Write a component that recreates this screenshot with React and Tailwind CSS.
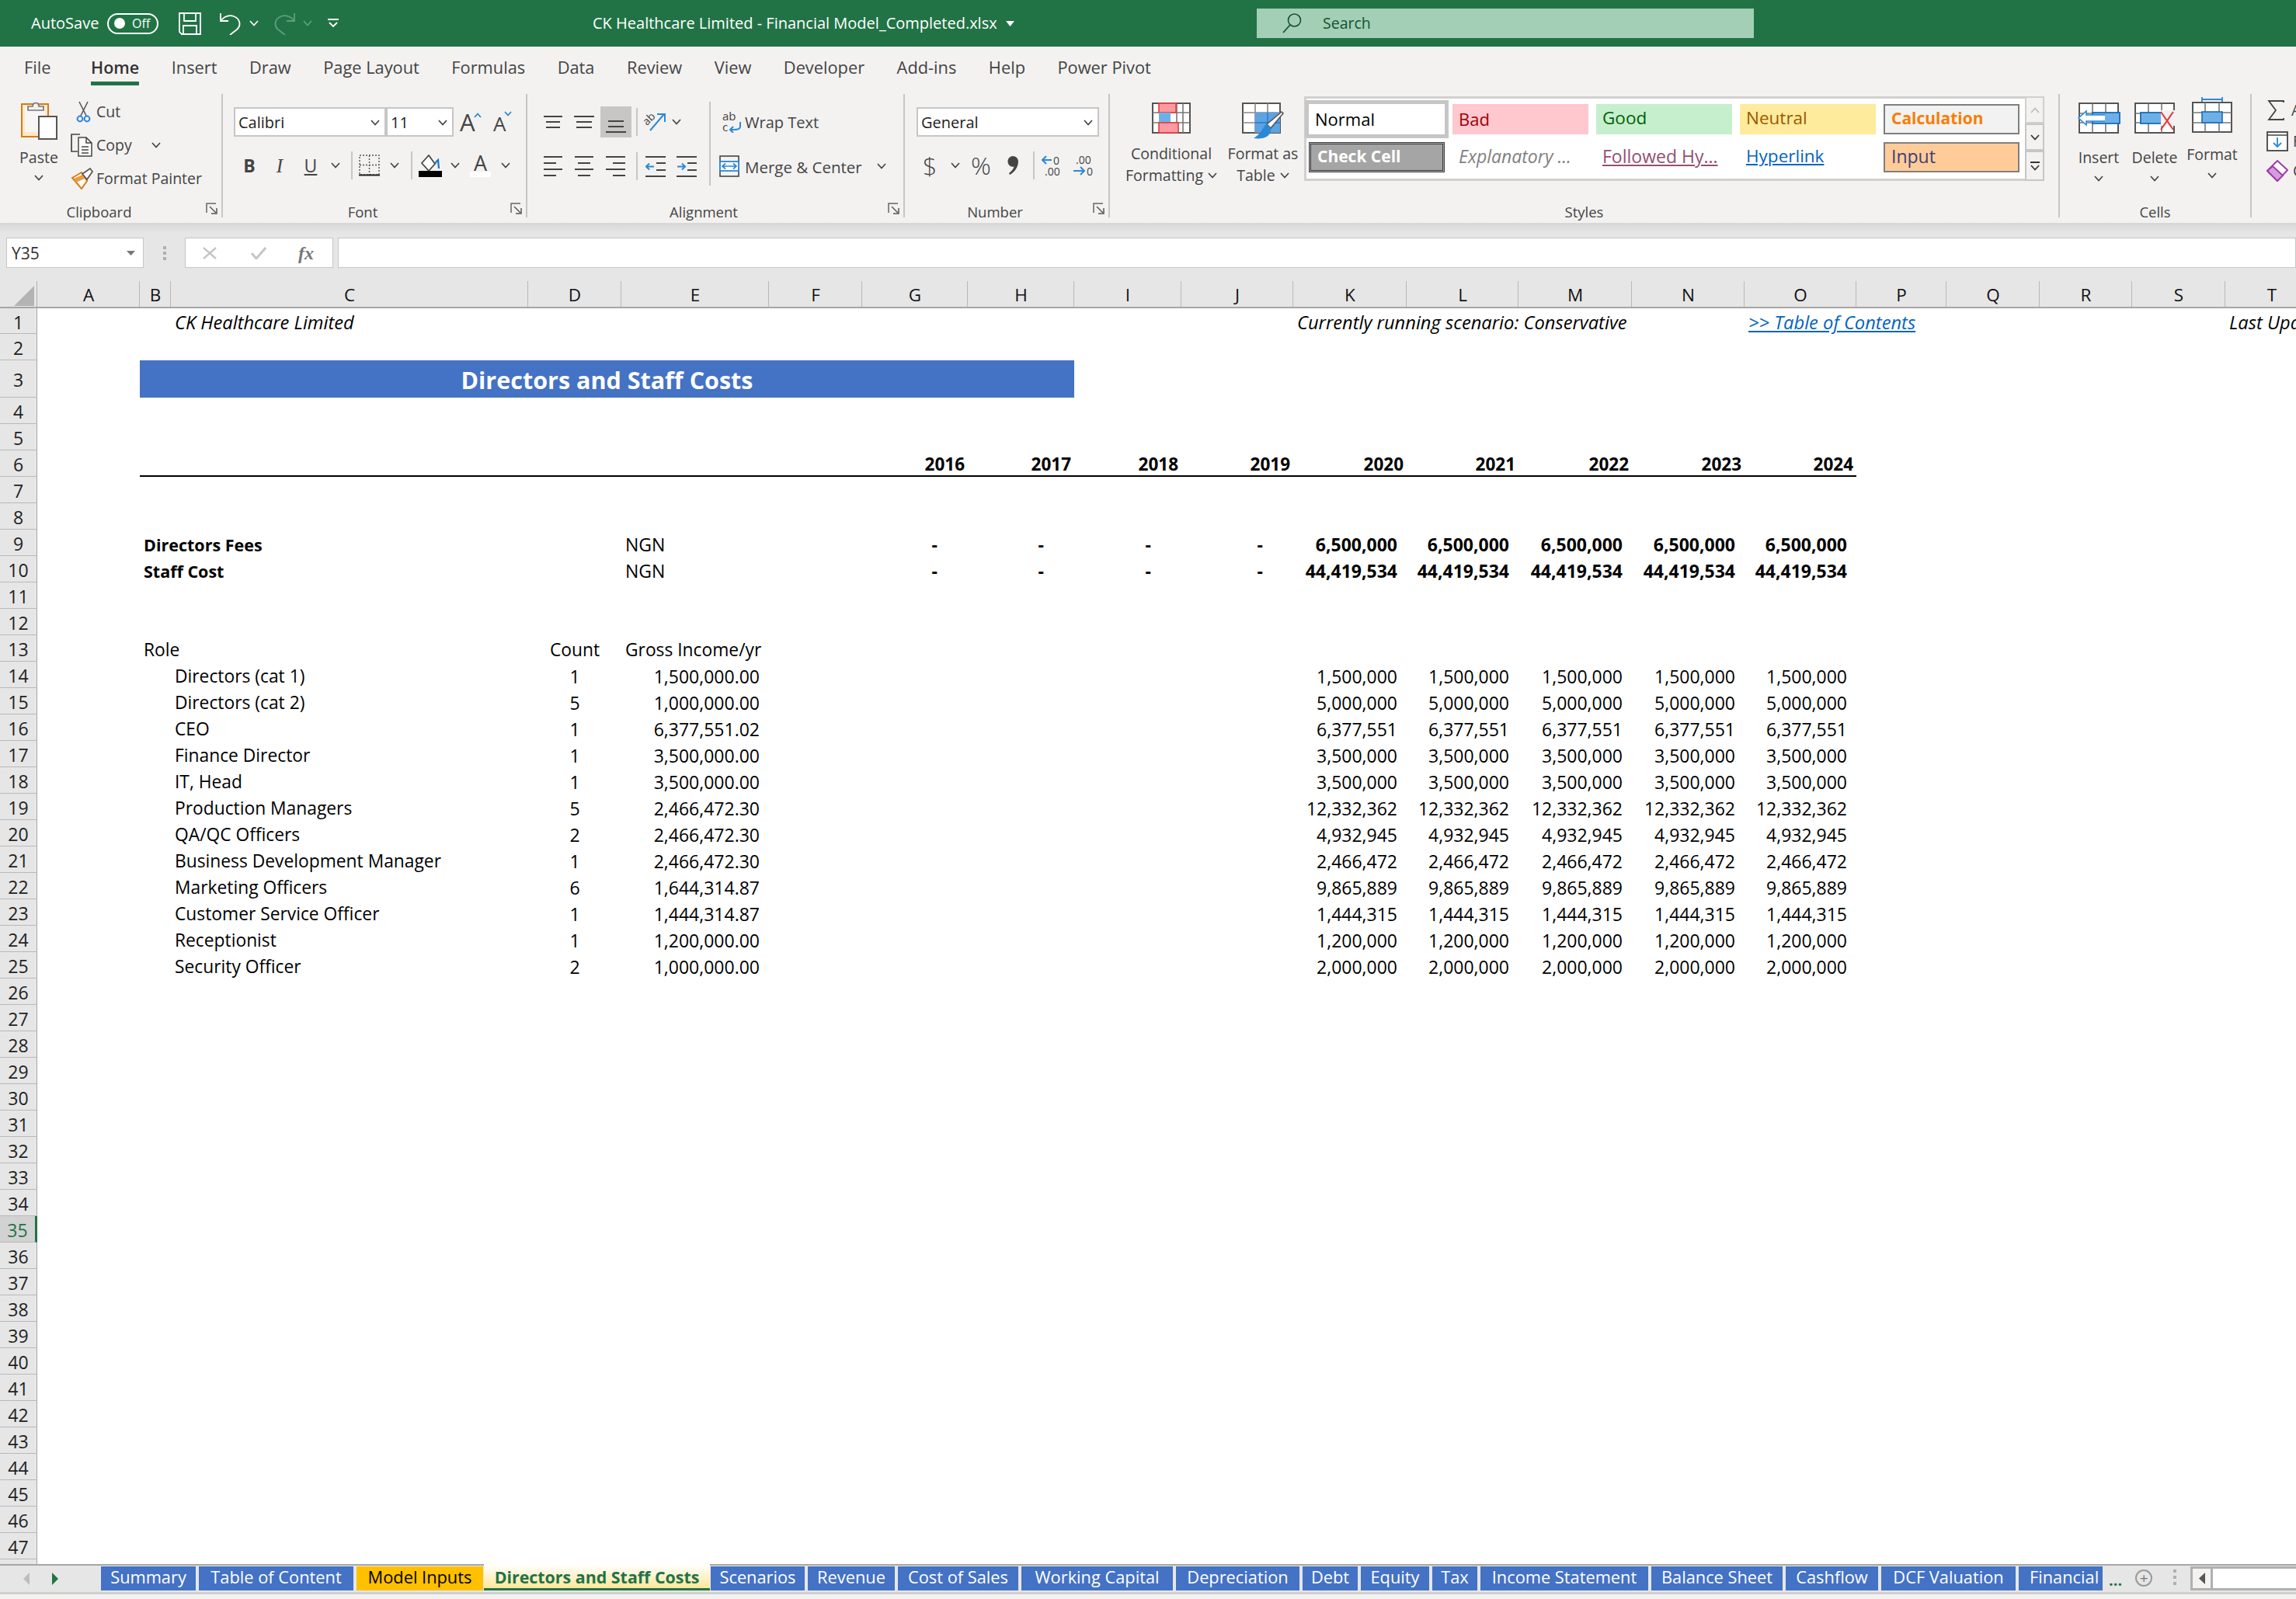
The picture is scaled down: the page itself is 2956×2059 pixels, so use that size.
import React from 'react';

const Chev = ({ c = '#444', className = '' }) => (
  <svg width="12" height="8" viewBox="0 0 12 8" className={`shrink-0 ${className}`}>
    <polyline points="1,1 6,6.5 11,1" fill="none" stroke={c} strokeWidth="1.7" />
  </svg>
);

const Launcher = () => (
  <svg width="15" height="15" viewBox="0 0 15 15">
    <polyline points="1,13 1,1 13,1" fill="none" stroke="#666" strokeWidth="1.5" />
    <polyline points="5,5 13,13" fill="none" stroke="#555" strokeWidth="1.5" />
    <polyline points="14,7 14,14 7,14" fill="none" stroke="#555" strokeWidth="1.5" />
  </svg>
);

const Sep = ({ className = '' }) => <div className={`w-[2px] h-[36px] bg-[#c8c6c4] shrink-0 ${className}`} />;

const Lines = ({ rows, w = 26, h = 16, c = '#444' }) => (
  <svg width={w} height={h} viewBox={`0 0 ${w} ${h}`} className="shrink-0">
    {rows.map(([x1, x2, y], i) => (
      <line key={i} x1={x1} x2={x2} y1={y} y2={y} stroke={c} strokeWidth="2" />
    ))}
  </svg>
);

function Group({ w, label, launcher, children }) {
  return (
    <div className={`relative flex flex-col shrink-0 h-[159px] mt-[11px] border-r-2 border-[#c8c6c4] ${w}`}>
      <div className="flex-1 min-h-0 flex">{children}</div>
      <div className={`relative h-[24px] -mb-[5px] flex items-center justify-center text-[18.5px] text-[#444] leading-none ${launcher ? 'pr-[30px]' : ''}`}>
        {label}
        {launcher && (
          <span className="absolute right-[5px] top-[0px] flex">
            <Launcher />
          </span>
        )}
      </div>
    </div>
  );
}

const GridIcon = ({ children, w = 50, h = 40 }) => (
  <svg width={w} height={h} viewBox={`0 0 ${w} ${h}`} className="shrink-0">{children}</svg>
);

function TitleBar() {
  return (
    <div className="h-[60px] shrink-0 bg-[#217346] flex items-center text-white">
      <span className="ml-[40px] w-[98px] text-[20px] leading-none">AutoSave</span>
      <div className="w-[66px] h-[27px] rounded-full border-2 border-white flex items-center pl-[7px]">
        <span className="w-[14px] h-[14px] rounded-full bg-white" />
        <span className="ml-[9px] text-[16px] leading-none">Off</span>
      </div>
      <svg width="29" height="29" viewBox="0 0 29 29" className="ml-[26px]">
        <path d="M1 1H28V28H4L1 25Z M7 1V11H22V1 M6 28V17H23V28" fill="none" stroke="#fff" strokeWidth="1.8" />
      </svg>
      <svg width="27" height="29" viewBox="0 0 27 29" className="ml-[24px]">
        <path d="M1 1V11H11 M1 11C6 5 12 3 18 5C26 8 28 17 22 22L13 29" fill="none" stroke="#fff" strokeWidth="1.8" />
      </svg>
      <Chev c="#fff" className="ml-[11px]" />
      <svg width="27" height="29" viewBox="0 0 27 29" className="ml-[20px]">
        <path d="M26 1V11H16 M26 11C21 5 15 3 9 5C1 8 -1 17 5 22L14 29" fill="none" stroke="#5f9f7d" strokeWidth="1.8" />
      </svg>
      <Chev c="#5f9f7d" className="ml-[10px]" />
      <svg width="14" height="12" viewBox="0 0 14 12" className="ml-[20px]">
        <path d="M0 1H14 M2 5L7 10L12 5" fill="none" stroke="#fff" strokeWidth="1.8" />
      </svg>
      <span className="ml-[327px] w-[525px] text-[20px] leading-none whitespace-nowrap">CK Healthcare Limited - Financial Model_Completed.xlsx</span>
      <svg width="11" height="7" viewBox="0 0 11 7" className="ml-[7px]">
        <path d="M0 0H11L5.5 7Z" fill="#fff" />
      </svg>
      <div className="ml-[312px] w-[640px] h-[38px] bg-[#a2cfb5] flex items-center text-[#14532f]">
        <svg width="25" height="26" viewBox="0 0 25 26" className="ml-[33px]">
          <circle cx="15.5" cy="9" r="8" fill="none" stroke="#14532f" strokeWidth="1.6" />
          <line x1="10" y1="15" x2="1" y2="25" stroke="#14532f" strokeWidth="1.8" />
        </svg>
        <span className="ml-[27px] text-[19.5px] leading-none">Search</span>
      </div>
    </div>
  );
}

const TABS = ['File', 'Home', 'Insert', 'Draw', 'Page Layout', 'Formulas', 'Data', 'Review', 'View', 'Developer', 'Add-ins', 'Help', 'Power Pivot'];

function TabStrip() {
  return (
    <div className="h-[50px] flex items-stretch pl-[31px] gap-[41.5px] text-[21.8px] text-[#444] whitespace-nowrap">
      {TABS.map((t) => (
        <div key={t} className={`flex items-center ${t === 'Home' ? 'font-semibold text-[21.5px] border-b-[5px] border-[#217346] text-[#333] pt-[10px]' : 'pt-[5px]'} ${t === 'File' ? 'mr-[10px]' : ''}`}>
          {t}
        </div>
      ))}
    </div>
  );
}

function Clipboard() {
  const item = 'h-[43px] flex items-center text-[#444] text-[19.5px] whitespace-nowrap';
  return (
    <Group w="w-[287px]" label="Clipboard" launcher>
      <div className="ml-[6px] w-[88px] flex flex-col items-center pt-[7px] shrink-0 text-[19.5px] text-[#444]">
        <svg width="47" height="52" viewBox="0 0 47 52">
          <rect x="1" y="6" width="34" height="42" fill="#fbe9c8" stroke="#d77b18" strokeWidth="2" />
          <rect x="5" y="9" width="26" height="33" fill="#f7f6f5" />
          <path d="M9 14V9H15C15 3 23 3 23 9H29V14Z" fill="#f3f2f1" stroke="#777" strokeWidth="1.7" />
          <rect x="23" y="22" width="23" height="29" fill="#fff" stroke="#555" strokeWidth="2" />
        </svg>
        <span className="mt-[9px] leading-[28px]">Paste</span>
        <Chev className="mt-[8px]" />
      </div>
      <div className="pt-[1px] flex flex-col ml-[-3px]">
        <div className={item}>
          <svg width="33" height="30" viewBox="0 0 33 30" className="shrink-0">
            <path d="M11 2L20 20 M22 2L13 20" fill="none" stroke="#555" strokeWidth="1.6" />
            <circle cx="12" cy="24" r="3.4" fill="none" stroke="#2b88d8" strokeWidth="2" />
            <circle cx="21" cy="24" r="3.4" fill="none" stroke="#2b88d8" strokeWidth="2" />
          </svg>
          <span>Cut</span>
        </div>
        <div className={item}>
          <svg width="33" height="30" viewBox="0 0 33 30" className="shrink-0">
            <path d="M9 23H1V1H12" fill="none" stroke="#444" strokeWidth="1.7" />
            <path d="M10 5H20L27 12V29H10Z M20 5V12H27 M14 17H23 M14 21H23 M14 25H23" fill="#fff" stroke="#444" strokeWidth="1.5" />
          </svg>
          <span>Copy</span>
          <Chev className="ml-[25px]" />
        </div>
        <div className={item}>
          <svg width="33" height="28" viewBox="0 0 33 28" className="shrink-0">
            <path d="M2 13L14 6L21 17L14 27Z" fill="#fff" stroke="#d77b18" strokeWidth="2" />
            <path d="M4 14L15 9L18 14L7 19Z" fill="#ed9b40" />
            <path d="M15 8L25 1L28 5L21 15Z" fill="#fff" stroke="#555" strokeWidth="1.7" />
          </svg>
          <span>Format Painter</span>
        </div>
      </div>
    </Group>
  );
}

function Box({ w, text, className = '' }) {
  return (
    <div className={`${w} h-[38px] shrink-0 bg-white border-2 border-[#c6c6c6] flex items-center justify-between pl-[4px] pr-[6px] pt-[2px] text-[20px] text-[#222] ${className}`}>
      <span>{text}</span>
      <Chev />
    </div>
  );
}

function FontGroup() {
  return (
    <Group w="w-[392px]" label="Font" launcher>
      <div className="flex flex-col">
        <div className="flex items-center pt-[17px] ml-[14px]">
          <Box w="w-[196px]" text="Calibri" />
          <Box w="w-[87px]" text="11" />
          <div className="ml-[8px] w-[26px] relative text-[31px] leading-none text-[#444]">
            A
            <svg width="10" height="7" viewBox="0 0 10 7" className="absolute left-[18px] top-[3px]">
              <polyline points="1,6 5,1.5 9,6" fill="none" stroke="#2b88d8" strokeWidth="1.8" />
            </svg>
          </div>
          <div className="ml-[17px] w-[24px] relative text-[26px] leading-none text-[#444] pt-[3px]">
            A
            <svg width="10" height="7" viewBox="0 0 10 7" className="absolute left-[14px] top-[0px]">
              <polyline points="1,1 5,5.5 9,1" fill="none" stroke="#2b88d8" strokeWidth="1.8" />
            </svg>
          </div>
        </div>
        <div className="flex items-center mt-[17px] h-[40px] text-[#444]">
          <span className="ml-[17px] w-[34px] text-center font-bold text-[23px] leading-none">B</span>
          <span className="ml-[5px] w-[34px] text-center italic text-[25px] leading-none font-['Liberation_Serif',serif]">I</span>
          <span className="ml-[5px] w-[36px] text-center underline text-[23px] leading-none">U</span>
          <Chev className="ml-[8px] mr-[8px]" />
          <Sep className="ml-[6px]" />
          <svg width="27" height="28" viewBox="0 0 27 28" className="ml-[8px] shrink-0">
            <path d="M1 1H26V26H1Z M13.5 1V26 M1 13.5H26" fill="none" stroke="#555" strokeWidth="1.4" strokeDasharray="2 2" />
            <line x1="0" y1="26.5" x2="27" y2="26.5" stroke="#222" strokeWidth="2" />
          </svg>
          <Chev className="ml-[13px]" />
          <Sep className="ml-[15px]" />
          <svg width="30" height="29" viewBox="0 0 30 29" className="ml-[8px] shrink-0">
            <path d="M4 11L13 1L21 12L13 21Z" fill="#fff" stroke="#444" strokeWidth="1.7" />
            <path d="M21 12C24 7 24 8 25 7L26 18" fill="none" stroke="#1a75c4" strokeWidth="2.2" />
            <rect x="0" y="21" width="30" height="8" fill="#000" />
          </svg>
          <Chev className="ml-[11px]" />
          <div className="ml-[13px] w-[27px] flex flex-col items-center">
            <span className="text-[27px] leading-[21px] text-[#444]">A</span>
            <span className="w-[27px] h-[7px] mt-[1px] bg-white" />
          </div>
          <Chev className="ml-[13px]" />
        </div>
      </div>
    </Group>
  );
}

function Alignment() {
  const leftL = [[0, 24, 1], [0, 16, 9], [0, 24, 17], [0, 16, 25]];
  const centerL = [[1, 25, 1], [5, 21, 9], [1, 25, 17], [5, 21, 25]];
  const rightL = [[0, 25, 1], [9, 25, 9], [0, 25, 17], [9, 25, 25]];
  return (
    <Group w="w-[486px]" label="Alignment" launcher>
      <div className="w-[234px] flex flex-col shrink-0">
        <div className="flex items-center mt-[16px] h-[40px]">
          <div className="ml-[21px]"><Lines w={24} rows={[[0, 24, 1], [3, 21, 8], [3, 21, 15]]} /></div>
          <div className="ml-[15px]"><Lines rows={[[0, 26, 1], [3, 23, 8], [3, 23, 15]]} /></div>
          <div className="ml-[8px] w-[40px] h-[40px] bg-[#c8c6c4] flex items-end justify-center pb-[6px]">
            <Lines w={26} rows={[[3, 23, 1], [3, 23, 8], [0, 26, 15]]} />
          </div>
          <Sep className="ml-[6px]" />
          <svg width="29" height="27" viewBox="0 0 29 27" className="ml-[8px] shrink-0">
            <path d="M8 24L26 3 M17 3H27V13" fill="none" stroke="#2b88d8" strokeWidth="2" />
            <text x="0" y="15" fontSize="14" fill="#444" transform="rotate(-45 6 12)">ab</text>
          </svg>
          <Chev className="ml-[7px]" />
        </div>
        <div className="flex items-center mt-[17px] h-[40px]">
          <div className="ml-[21px]"><Lines w={24} h={27} rows={leftL} /></div>
          <div className="ml-[15px]"><Lines h={27} rows={centerL} /></div>
          <div className="ml-[15px]"><Lines w={25} h={27} rows={rightL} /></div>
          <Sep className="ml-[14px]" />
          <svg width="26" height="27" viewBox="0 0 26 27" className="ml-[10px] shrink-0">
            <path d="M0 1H26 M0 26H26 M14 9H26 M14 18H26" stroke="#444" strokeWidth="2" />
            <path d="M11 13.5H1 M5 9.5L1 13.5L5 17.5" fill="none" stroke="#2b88d8" strokeWidth="2" />
          </svg>
          <svg width="26" height="27" viewBox="0 0 26 27" className="ml-[14px] shrink-0">
            <path d="M0 1H26 M0 26H26 M14 9H26 M14 18H26" stroke="#444" strokeWidth="2" />
            <path d="M1 13.5H11 M7 9.5L11 13.5L7 17.5" fill="none" stroke="#2b88d8" strokeWidth="2" />
          </svg>
        </div>
      </div>
      <div className="w-[2px] h-[108px] mt-[10px] bg-[#c8c6c4] shrink-0" />
      <div className="flex flex-col text-[20px] text-[#444] whitespace-nowrap">
        <div className="flex items-center mt-[16px] h-[40px] ml-[15px]">
          <svg width="24" height="28" viewBox="0 0 24 28" className="shrink-0">
            <text x="0" y="12" fontSize="15" fill="#444">ab</text>
            <text x="0" y="26" fontSize="15" fill="#444">c</text>
            <path d="M23 14V20C23 23 19 24 15 24H10 M14 20L10 24L14 28" fill="none" stroke="#2b88d8" strokeWidth="2" />
          </svg>
          <span className="ml-[5px] pt-[2px]">Wrap Text</span>
        </div>
        <div className="flex items-center mt-[17px] h-[40px] ml-[11px]">
          <svg width="26" height="28" viewBox="0 0 26 28" className="shrink-0">
            <rect x="1" y="1" width="24" height="26" fill="none" stroke="#444" strokeWidth="1.6" />
            <rect x="1" y="8" width="24" height="12" fill="#fff" stroke="#2b88d8" strokeWidth="1.8" />
            <path d="M4 14H22 M8 10.5L4 14L8 17.5 M18 10.5L22 14L18 17.5" fill="none" stroke="#2b88d8" strokeWidth="1.7" />
          </svg>
          <span className="ml-[7px] w-[170px] pt-[2px] text-[20.5px]">Merge &amp; Center</span>
          <Chev />
        </div>
      </div>
    </Group>
  );
}

function NumberGroup() {
  return (
    <Group w="w-[264px]" label="Number" launcher>
      <div className="flex flex-col text-[#444]">
        <div className="flex items-center pt-[17px] ml-[15px]">
          <Box w="w-[235px]" text="General" />
        </div>
        <div className="flex items-center mt-[17px] h-[40px]">
          <span className="ml-[23px] w-[17px] text-[32px] leading-none text-center font-light">$</span>
          <Chev className="ml-[19px]" />
          <span className="ml-[12px] w-[30px] text-[32px] leading-none text-center font-light">%</span>
          <svg width="14" height="26" viewBox="0 0 14 26" className="ml-[19px] shrink-0">
            <path d="M7 1C11 1 14 4 14 8C14 15 9 22 3 25L2 23C6 20 8 17 8.5 14.5C4 15.5 0.5 12 0.5 8C0.5 4 3.5 1 7 1Z" fill="#444" />
          </svg>
          <Sep className="ml-[19px]" />
          <svg width="27" height="28" viewBox="0 0 27 28" className="ml-[9px] shrink-0">
            <text x="15" y="13" fontSize="14" fill="#444">0</text>
            <text x="4" y="27" fontSize="14" fill="#444">.00</text>
            <path d="M13 7H1 M6 2L1 7L6 12" fill="none" stroke="#2b88d8" strokeWidth="2" />
          </svg>
          <svg width="27" height="28" viewBox="0 0 27 28" className="ml-[13px] shrink-0">
            <text x="4" y="12" fontSize="14" fill="#444">.00</text>
            <text x="18" y="27" fontSize="14" fill="#444">0</text>
            <path d="M1 21H15 M10 16L15 21L10 26" fill="none" stroke="#2b88d8" strokeWidth="2" />
          </svg>
        </div>
      </div>
    </Group>
  );
}

const STYLE_CELLS = [
  ['Normal', 'bg-white text-black outline-[5px] outline-[#c6c6c6] text-[22px]'],
  ['Bad', 'bg-[#ffc7ce] text-[#9c0006] text-[22px]'],
  ['Good', 'bg-[#c6efce] text-[#006100] text-[22.5px]'],
  ['Neutral', 'bg-[#ffeb9c] text-[#9c5700] text-[22.5px]'],
  ['Calculation', 'bg-[#f2f2f2] text-[#fa7d00] font-bold border-2 border-[#7f7f7f] text-[21px]'],
  ['Check Cell', 'bg-[#a5a5a5] text-white font-bold border-[3px] border-double border-[#3f3f3f] text-[21px]'],
  ['Explanatory ...', 'bg-white text-[#7f7f7f] italic text-[23px]'],
  ['Followed Hy...', 'bg-white text-[#954f72] underline text-[23px]'],
  ['Hyperlink', 'bg-white text-[#0563c1] underline text-[22.5px]'],
  ['Input', 'bg-[#ffcc99] text-[#3f3f76] border-2 border-[#7f7f7f] text-[23px]'],
];

function Styles() {
  const txt = 'text-[19.5px] text-[#444] leading-[28px] whitespace-nowrap text-center';
  return (
    <Group w="w-[1223px]" label="Styles">
      <div className="ml-[19px] w-[120px] shrink-0 flex flex-col items-center pt-[11px]">
        <GridIcon>
          <rect x="1" y="1" width="48" height="38" fill="#fff" stroke="#555" strokeWidth="2" />
          <path d="M1 13H49 M1 26H49 M16 1V39 M32 1V39 M40 1V39" stroke="#777" strokeWidth="1.6" />
          <rect x="9" y="1" width="22" height="12" fill="#ff9aa2" stroke="#e43b3b" strokeWidth="1.6" />
          <rect x="9" y="13" width="15" height="13" fill="#6db0e8" />
          <rect x="9" y="26" width="25" height="13" fill="#ff9aa2" stroke="#e43b3b" strokeWidth="1.6" />
        </GridIcon>
        <div className={`mt-[12px] ${txt}`}>Conditional</div>
        <div className={`flex items-center gap-[6px] ${txt}`}>Formatting <Chev /></div>
      </div>
      <div className="ml-[13px] w-[90px] shrink-0 flex flex-col items-center pt-[11px]">
        <svg width="54" height="48" viewBox="0 0 54 48" className="shrink-0 -mb-[8px]">
          <rect x="1" y="1" width="48" height="38" fill="#fff" stroke="#555" strokeWidth="2" />
          <path d="M1 13H49 M1 26H49 M17 1V39 M33 1V39" stroke="#888" strokeWidth="1.6" />
          <rect x="17" y="13" width="32" height="26" fill="#5ba3e3" />
          <path d="M17 26H49 M33 13V39" stroke="#2a79c2" strokeWidth="1.4" />
          <path d="M51 12L32 28L37 33L53 14Z" fill="#fff" stroke="#555" strokeWidth="1.6" />
          <path d="M32 28C26 30 28 38 15 46C26 48 39 44 37 33Z" fill="#2b88d8" />
        </svg>
        <div className={`mt-[12px] ${txt}`}>Format as</div>
        <div className={`flex items-center gap-[6px] ${txt}`}>Table <Chev /></div>
      </div>
      <div className="ml-[8px] mt-[3px] w-[953px] h-[109px] shrink-0 flex bg-white border-[3px] border-r-0 border-[#d2d0ce]">
        <div className="pl-[3px] pt-[7px] grid grid-cols-[175px_175px_175px_175px_175px] grid-rows-[39px_39px] gap-[10px] leading-none">
          {STYLE_CELLS.map(([t, c]) => (
            <div key={t} className={`flex items-center pl-[8px] pb-[2px] whitespace-nowrap overflow-hidden ${c}`}>{t}</div>
          ))}
        </div>
        <div className="ml-auto w-[25px] flex flex-col -my-[3px] shrink-0">
          <div className="h-[35px] border-2 border-[#d2d0ce] bg-[#f3f2f1] flex items-center justify-center"><svg width="12" height="8" viewBox="0 0 12 8"><polyline points="1,7 6,1.5 11,7" fill="none" stroke="#bbb" strokeWidth="1.7" /></svg></div>
          <div className="h-[35px] border-2 border-[#c8c6c4] bg-[#f3f2f1] flex items-center justify-center"><Chev c="#333" /></div>
          <div className="h-[39px] border-2 border-[#c8c6c4] bg-[#f3f2f1] flex flex-col items-center justify-center gap-[2px]">
            <span className="w-[12px] h-[2px] bg-[#333]" />
            <Chev c="#333" />
          </div>
        </div>
      </div>
    </Group>
  );
}

function CellBtn({ label, children, high }) {
  return (
    <div className={`w-[72px] shrink-0 flex flex-col items-center text-[19.5px] text-[#444] ${high ? 'pt-[2px]' : 'pt-[11px]'}`}>
      {children}
      <span className={`leading-[28px] ${high ? 'mt-[14px]' : 'mt-[17px]'}`}>{label}</span>
      <Chev className="mt-[9px]" />
    </div>
  );
}

function Cells() {
  const base = (
    <>
      <rect x="3" y="1" width="50" height="38" fill="#fff" stroke="#555" strokeWidth="2" />
      <path d="M3 14H53 M3 26H53 M20 1V39 M37 1V39" stroke="#777" strokeWidth="1.6" />
    </>
  );
  return (
    <Group w="w-[247px]" label="Cells">
      <div className="ml-[14px] flex">
        <CellBtn label="Insert">
          <GridIcon w={56}>
            {base}
            <rect x="20" y="13" width="35" height="14" fill="#6db0e8" stroke="#1a6cb5" strokeWidth="1.8" />
            <path d="M36 16H12V11L2 20L12 29V24H36" fill="#fff" stroke="#2b88d8" strokeWidth="1.6" />
          </GridIcon>
        </CellBtn>
        <CellBtn label="Delete">
          <GridIcon w={56}>
            {base}
            <rect x="10" y="13" width="27" height="14" fill="#6db0e8" stroke="#1a6cb5" strokeWidth="1.8" />
            <rect x="36" y="10" width="20" height="20" fill="#f3f2f1" />
            <path d="M36 12L52 35 M52 12L36 35" stroke="#e5393a" strokeWidth="2" fill="none" />
          </GridIcon>
        </CellBtn>
        <div className="ml-[2px]">
          <CellBtn label="Format" high>
            <svg width="52" height="48" viewBox="0 0 52 48" className="shrink-0">
              <path d="M13 2V9 M13 5H39 M39 2V9" stroke="#2b88d8" strokeWidth="1.8" />
              <rect x="1" y="9" width="50" height="38" fill="#fff" stroke="#555" strokeWidth="2" />
              <path d="M1 22H51 M1 35H51 M17 9V47 M35 9V47" stroke="#777" strokeWidth="1.6" />
              <rect x="13" y="21" width="26" height="14" fill="#6db0e8" stroke="#1a6cb5" strokeWidth="1.6" />
            </svg>
          </CellBtn>
        </div>
      </div>
    </Group>
  );
}

function Editing() {
  return (
    <div className="shrink-0 h-[159px] mt-[11px] w-[60px] pl-[19px] flex flex-col text-[19.5px] text-[#444] whitespace-nowrap">
      <div className="flex items-center h-[41px]">
        <svg width="24" height="26" viewBox="0 0 24 26" className="shrink-0">
          <path d="M22 3V1H3L12 13L3 25H22V23" fill="none" stroke="#444" strokeWidth="1.8" />
        </svg>
        <span className="ml-[8px]">AutoSum</span>
      </div>
      <div className="flex items-center h-[39px]">
        <svg width="28" height="26" viewBox="0 0 28 26" className="shrink-0">
          <rect x="1" y="1" width="26" height="24" fill="#fff" stroke="#444" strokeWidth="1.8" />
          <path d="M1 5H27" stroke="#444" strokeWidth="1.5" />
          <path d="M14 8V20 M9 15L14 20L19 15" fill="none" stroke="#2b88d8" strokeWidth="1.8" />
        </svg>
        <span className="ml-[6px]">Fill</span>
      </div>
      <div className="flex items-center h-[38px]">
        <svg width="28" height="28" viewBox="0 0 28 28" className="shrink-0">
          <path d="M14 1L27 13L14 27L1 14Z" fill="#fff" stroke="#a23dad" strokeWidth="2" />
          <path d="M8 8L21 20L14 27L1 14Z" fill="#d59dde" stroke="#a23dad" strokeWidth="2" />
        </svg>
        <span className="ml-[6px]">Clear</span>
      </div>
    </div>
  );
}

function Ribbon() {
  return (
    <div className="h-[227px] shrink-0 bg-[#f3f2f1] flex flex-col">
      <TabStrip />
      <div className="flex">
        <Clipboard />
        <FontGroup />
        <Alignment />
        <NumberGroup />
        <Styles />
        <Cells />
        <Editing />
      </div>
    </div>
  );
}

function FormulaBar() {
  return (
    <div className="h-[75px] shrink-0 bg-[#e6e6e6] flex flex-col">
      <div className="h-[13px] bg-gradient-to-b from-[#d6d6d6] to-[#e6e6e6]" />
      <div className="mt-[6px] h-[39px] flex">
        <div className="ml-[8px] w-[177px] bg-white border border-[#c6c6c6] flex items-center justify-between pl-[6px] pr-[10px] pt-[1px] text-[21px] text-[#333] leading-none">
          Y35
          <svg width="11" height="6" viewBox="0 0 11 6"><path d="M0 0H11L5.5 6Z" fill="#777" /></svg>
        </div>
        <div className="ml-[25px] w-[4px] flex flex-col justify-center gap-[3px]">
          <span className="h-[4px] bg-[#b0b0b0]" />
          <span className="h-[4px] bg-[#b0b0b0]" />
          <span className="h-[4px] bg-[#b0b0b0]" />
        </div>
        <div className="ml-[24px] w-[191px] bg-white border border-[#c6c6c6] flex items-center">
          <svg width="18" height="16" viewBox="0 0 18 16" className="ml-[22px]">
            <path d="M1 1L17 15 M17 1L1 15" stroke="#c6c6c6" strokeWidth="2.4" />
          </svg>
          <svg width="20" height="16" viewBox="0 0 20 16" className="ml-[44px]">
            <path d="M1 8L7 15L19 1" fill="none" stroke="#c6c6c6" strokeWidth="3" />
          </svg>
          <span className="ml-[41px] font-['Liberation_Serif',serif] italic font-bold text-[24px] leading-none text-[#777]">fx</span>
        </div>
        <div className="ml-[6px] flex-1 bg-white border border-[#c6c6c6]" />
      </div>
    </div>
  );
}

const COLS = 'ABCDEFGHIJKLMNOPQRST'.split('');
const TEMPLATE = 'grid grid-cols-[48px_132px_40px_460px_120px_190px_120px_136px_137px_138px_144px_146px_144px_146px_145px_144px_116px_120px_119px_120px_120px]';

function ColHeader() {
  return (
    <div className={`${TEMPLATE} h-[35px] shrink-0 bg-[#e6e6e6] border-b-2 border-[#a6a6a6] overflow-hidden`}>
      <div className="relative border-r border-[#b1b1b1]">
        <svg width="26" height="26" viewBox="0 0 26 26" className="absolute left-[18px] top-[6px]">
          <path d="M26 0V26H0Z" fill="#b4b4b4" />
        </svg>
      </div>
      {COLS.map((c) => (
        <div key={c} className="flex items-center justify-center border-r border-[#b9b9b9] text-[22.5px] leading-none text-[#111] pt-[4px] pl-[1px]">{c}</div>
      ))}
    </div>
  );
}

const ROLES = [
  ['Directors (cat 1)', '1', '1,500,000.00', '1,500,000'],
  ['Directors (cat 2)', '5', '1,000,000.00', '5,000,000'],
  ['CEO', '1', '6,377,551.02', '6,377,551'],
  ['Finance Director', '1', '3,500,000.00', '3,500,000'],
  ['IT, Head', '1', '3,500,000.00', '3,500,000'],
  ['Production Managers', '5', '2,466,472.30', '12,332,362'],
  ['QA/QC Officers', '2', '2,466,472.30', '4,932,945'],
  ['Business Development Manager', '1', '2,466,472.30', '2,466,472'],
  ['Marketing Officers', '6', '1,644,314.87', '9,865,889'],
  ['Customer Service Officer', '1', '1,444,314.87', '1,444,315'],
  ['Receptionist', '1', '1,200,000.00', '1,200,000'],
  ['Security Officer', '2', '1,000,000.00', '2,000,000'],
];

const L = 'justify-start pl-[5px]';
const R = 'justify-end pr-[12px]';
const FIVE = ['K', 'L', 'M', 'N', 'O'];

function buildRows() {
  const data = {};
  const set = (r, c, t, cls) => {
    data[r] = data[r] || {};
    data[r][c] = [t, cls];
  };
  const it = `${L} italic text-[23.7px]`;
  set(1, 'C', 'CK Healthcare Limited', it);
  set(1, 'K', 'Currently running scenario: Conservative', it);
  set(1, 'O', <span className="underline text-[#0563c1]">&gt;&gt; Table of Contents</span>, it);
  set(1, 'T', 'Last Updated', it);
  [['G', '2016'], ['H', '2017'], ['I', '2018'], ['J', '2019'], ['K', '2020'], ['L', '2021'], ['M', '2022'], ['N', '2023'], ['O', '2024']].forEach(([c, y]) =>
    set(6, c, y, 'justify-end pr-[4px] font-bold text-[22.5px]')
  );
  [[9, 'Directors Fees', '6,500,000'], [10, 'Staff Cost', '44,419,534']].forEach(([r, n, v]) => {
    set(r, 'B', n, `${L} font-bold text-[21.5px]`);
    set(r, 'E', 'NGN', `${L} text-[23px]`);
    ['G', 'H', 'I', 'J'].forEach((c) => set(r, c, '-', 'justify-end pr-[39px] font-bold text-[23px]'));
    FIVE.forEach((c) => set(r, c, v, `${R} font-bold text-[23px]`));
  });
  const reg = 'text-[23px]';
  const lab = 'text-[22.8px]';
  set(13, 'B', 'Role', `${L} ${lab}`);
  set(13, 'D', 'Count', `justify-center ${lab}`);
  set(13, 'E', 'Gross Income/yr', `${L} ${lab}`);
  ROLES.forEach(([n, cnt, g, v], i) => {
    const r = 14 + i;
    set(r, 'C', n, `${L} ${lab}`);
    set(r, 'D', cnt, `justify-center ${reg}`);
    set(r, 'E', g, `${R} ${reg}`);
    FIVE.forEach((c) => set(r, c, v, `${R} ${reg}`));
  });
  return data;
}

function Sheet() {
  const data = buildRows();
  const rows = Array.from({ length: 48 }, (_, i) => i + 1);
  const cellBase = 'min-w-0 flex items-center pt-[5px] whitespace-nowrap leading-none text-black';
  return (
    <div className={`${TEMPLATE} content-start flex-1 min-h-0 overflow-hidden bg-white`}>
      {rows.map((r) => {
        const h = r === 1 ? 'h-[33px]' : r === 3 ? 'h-[48px]' : 'h-[34px]';
        const sel = r === 35;
        return (
          <React.Fragment key={r}>
            <div className={`${h} flex items-center justify-center border-b border-[#b9b9b9] text-[23px] leading-none pt-[4px] ${sel ? 'bg-[#d2d2d2] text-[#217346] border-r-[3px] border-r-[#217346]' : 'bg-[#e6e6e6] text-[#222] border-r border-r-[#a6a6a6]'}`}>
              {r === 48 ? '' : r}
            </div>
            {r === 3 ? (
              <>
                <div className="h-[48px]" />
                <div className="h-[48px] col-span-7 bg-[#4472c4] text-white font-bold text-[30.5px] leading-none flex items-center justify-center pt-[2px]">Directors and Staff Costs</div>
                {COLS.slice(8).map((c) => <div key={c} className="h-[48px]" />)}
              </>
            ) : (
              COLS.map((c) => {
                const v = data[r] && data[r][c];
                const line = r === 6 && c !== 'A' && COLS.indexOf(c) <= COLS.indexOf('O') ? 'border-b-2 border-black' : '';
                return (
                  <div key={c} className={`${h} ${cellBase} ${line} ${v ? v[1] : ''}`}>
                    {v ? v[0] : null}
                  </div>
                );
              })
            )}
          </React.Fragment>
        );
      })}
    </div>
  );
}

const SHEET_TABS = [
  ['Summary', 'w-[122px]'],
  ['Table of Content', 'w-[199px]'],
  ['Model Inputs', 'w-[163px]'],
  ['Directors and Staff Costs', 'w-[291px]'],
  ['Scenarios', 'w-[121px]'],
  ['Revenue', 'w-[112px]'],
  ['Cost of Sales', 'w-[155px]'],
  ['Working Capital', 'w-[195px]'],
  ['Depreciation', 'w-[159px]'],
  ['Debt', 'w-[71px]'],
  ['Equity', 'w-[88px]'],
  ['Tax', 'w-[58px]'],
  ['Income Statement', 'w-[216px]'],
  ['Balance Sheet', 'w-[169px]'],
  ['Cashflow', 'w-[119px]'],
  ['DCF Valuation', 'w-[173px]'],
  ['Financial Statements', 'w-[108px]'],
];

function SheetTabs() {
  return (
    <div className="h-[39px] shrink-0 bg-[#e6e6e6] flex flex-col">
      <div className="h-[36px] flex border-t-2 border-[#a6a6a6]">
        <div className="w-[130px] shrink-0 flex items-center pl-[30px]">
          <svg width="8" height="16" viewBox="0 0 8 16"><path d="M8 0V16L0 8Z" fill="#bdbdbd" /></svg>
          <svg width="8" height="16" viewBox="0 0 8 16" className="ml-[29px]"><path d="M0 0V16L8 8Z" fill="#217346" /></svg>
        </div>
        <div className="flex gap-[4px] pt-[1px] text-[21.8px] leading-none whitespace-nowrap">
          {SHEET_TABS.map(([t, w]) => {
            const active = t === 'Directors and Staff Costs';
            const model = t === 'Model Inputs';
            const fin = t === 'Financial Statements';
            return (
              <div
                key={t}
                className={`${w} shrink-0 flex items-center overflow-hidden ${fin ? 'justify-start pl-[14px]' : 'justify-center'} ${
                  active
                    ? '-mx-[3px] -mt-[3px] h-[34px] pt-[2px] bg-gradient-to-b from-white to-[#ffe699] text-[#217346] font-bold text-[21.4px] border-b-[3px] border-[#217346]'
                    : model
                    ? 'h-[31px] pb-[3px] bg-[#ffc000] text-black'
                    : 'h-[31px] pb-[3px] bg-[#4472c4] text-white'
                }`}
              >
                {t}
              </div>
            );
          })}
        </div>
        <span className="ml-[8px] mt-[9px] text-[20px] font-bold leading-none text-[#217346]">...</span>
        <div className="ml-[17px] mt-[5px] w-[22px] h-[22px] rounded-full border-2 border-[#9a9a9a] flex items-center justify-center text-[19px] leading-none text-[#777]">+</div>
        <div className="ml-[27px] mt-[5px] w-[4px] flex flex-col gap-[4px]">
          <span className="h-[4px] bg-[#b0b0b0]" />
          <span className="h-[4px] bg-[#b0b0b0]" />
          <span className="h-[4px] bg-[#b0b0b0]" />
        </div>
        <div className="ml-[18px] flex-1 h-[31px] mt-[1px] flex bg-white border-[3px] border-r-0 border-[#b0b0b0]">
          <div className="w-[26px] border-r-[3px] border-[#b0b0b0] bg-[#f3f2f1] flex items-center justify-center">
            <svg width="8" height="15" viewBox="0 0 8 15"><path d="M8 0V15L0 7.5Z" fill="#555" /></svg>
          </div>
        </div>
      </div>
      <div className="h-[3px] bg-[#cfcfcf]" />
    </div>
  );
}

export default function App() {
  return (
    <div className="w-[2956px] h-[2059px] overflow-hidden flex flex-col bg-white font-['Open_Sans','Noto_Sans',sans-serif]">
      <TitleBar />
      <Ribbon />
      <FormulaBar />
      <ColHeader />
      <Sheet />
      <SheetTabs />
      <div className="h-[6px] shrink-0 bg-[#f3f2f1]" />
    </div>
  );
}
